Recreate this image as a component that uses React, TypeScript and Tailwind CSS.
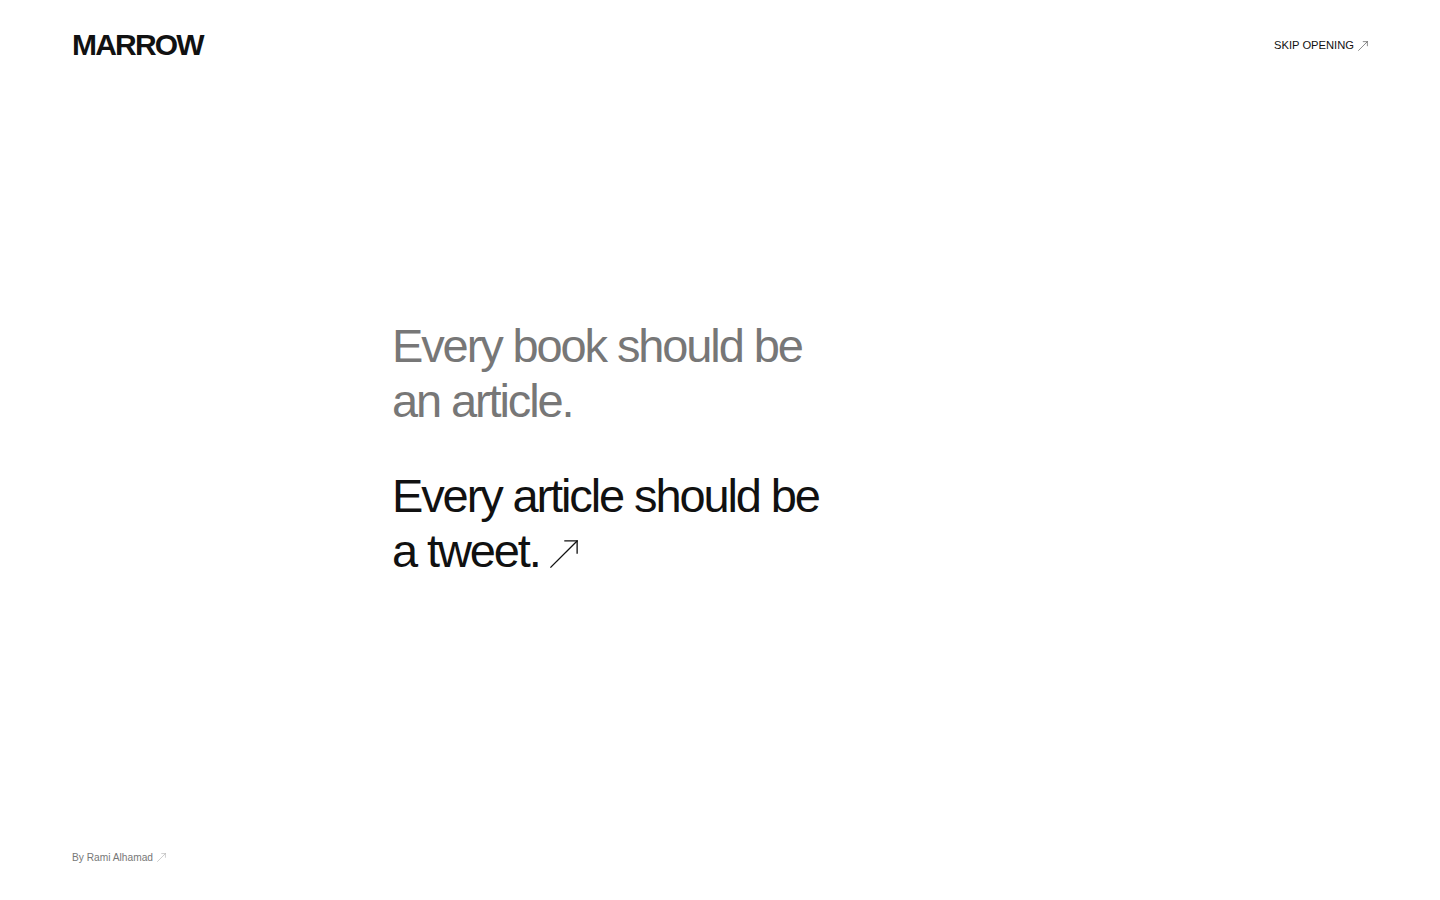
import React from 'react';

const Arrow = ({ className = '', stroke = 1 }: { className?: string; stroke?: number }) => (
  <svg viewBox="0 0 32 32" className={className} fill="none" stroke="currentColor" strokeWidth={stroke} strokeLinecap="square">
    <path d="M2 30 L30 2" />
    <path d="M17 2 L30 2 L30 15" />
  </svg>
);

const App = () => {
  return (
    <div className="h-[900px] w-full bg-white text-[#111] flex flex-col" style={{ fontFamily: '"Liberation Sans", Arial, sans-serif' }}>
      {/* Header */}
      <header className="flex items-start justify-between px-[72px] pt-[30px]">
        <div className="text-[30px] leading-none font-bold tracking-[-0.06em] text-[#111]">MARROW</div>
        <a className="flex items-center gap-[4px] pt-[10px] text-[11.2px] leading-none text-[#111]">
          SKIP OPENING <Arrow className="w-[10px] h-[10px] text-[#333]" stroke={1.8} />
        </a>
      </header>

      {/* Hero */}
      <main className="flex-1 flex items-center pl-[392px]">
        <div className="text-[47px] leading-[55px] tracking-[-0.045em] -mt-[16px]">
          <p className="text-[#777]">
            Every book should be
            <br />
            an article.
          </p>
          <p className="mt-[40px] text-[#111]">
            Every article should be
            <br />
            a tweet.{' '}
            <Arrow className="inline-block w-[30px] h-[30px] -ml-[2px] -mt-[1px] align-middle" stroke={1.4} />
          </p>
        </div>
      </main>

      {/* Footer */}
      <footer className="px-[72px] pb-[37px]">
        <a className="flex items-center gap-[4px] text-[10.2px] leading-none text-[#777]">
          By Rami Alhamad <Arrow className="w-[9px] h-[9px] text-[#aaa]" stroke={2} />
        </a>
      </footer>
    </div>
  );
};

export default App;
